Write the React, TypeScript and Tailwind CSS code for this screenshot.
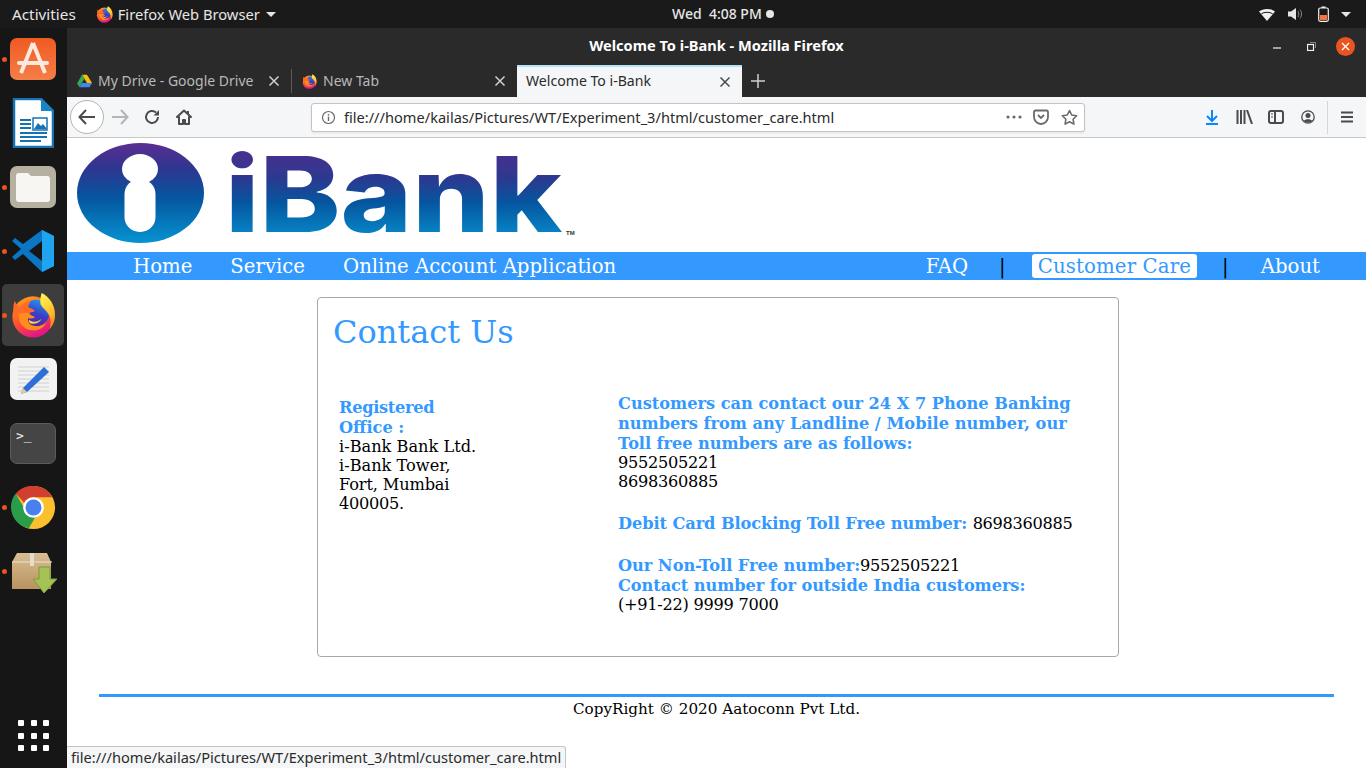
import React from "react";

const ui = { fontFamily: '"Noto Sans", "Open Sans", sans-serif' };
const serif = { fontFamily: '"DejaVu Serif", serif' };

function FirefoxIcon({ size = 16 }: { size?: number }) {
  return (
    <svg width={size} height={size} viewBox="0 0 48 48">
      <defs>
        <linearGradient id="ffa" x1="0.1" y1="0.1" x2="0.5" y2="1">
          <stop offset="0" stopColor="#ff9a1c" />
          <stop offset="0.55" stopColor="#ff4f2e" />
          <stop offset="1" stopColor="#e31587" />
        </linearGradient>
        <linearGradient id="ffb" x1="0.3" y1="0" x2="0.6" y2="1">
          <stop offset="0" stopColor="#fff44f" />
          <stop offset="0.6" stopColor="#ffbd2e" />
          <stop offset="1" stopColor="#ff7a1a" />
        </linearGradient>
        <linearGradient id="ffc" x1="0.7" y1="0" x2="0.3" y2="1">
          <stop offset="0" stopColor="#1f9af0" />
          <stop offset="0.5" stopColor="#3a3fc8" />
          <stop offset="1" stopColor="#5a1fa0" />
        </linearGradient>
      </defs>
      <circle cx="24" cy="26" r="21.500" fill="url(#ffa)" />
      <circle cx="27" cy="22" r="14" fill="url(#ffc)" />
      <path d="M33 1c8 4 14 12 14 23 0 6-2 11-6 15 2-5 2-11-1-16-2-4-6-6-8-10-1-4 0-8 1-12z" fill="url(#ffb)" />
      <path d="M9 21c-1 9 4 18 14 19 7 1 13-3 15-9-3 4-9 6-14 4-4-1-6-5-5-8 2 1 5 1 7-1-3-1-5-2-6-4-4 0-8-1-11-1z" fill="#ff8d1e" />
      <path d="M5 9c1 3 3 5 5 7 3-4 7-6 12-7-2 3-3 5-3 7 3 1 5 2 7 4-3 1-6 2-8 2-4 0-9 0-14 2-1-5-1-10 1-15z" fill="#ff6a26" />
      <path d="M20 29c3 3 9 3 13-1-2 4-7 6-11 5-2-1-3-2-2-4z" fill="#ffd43b" />
    </svg>
  );
}

function DriveIcon() {
  return (
    <svg width="15" height="14" viewBox="0 0 24 22">
      <path d="M8 1h8l8 13h-8z" fill="#fbbc04" />
      <path d="M8 1l-8 14 4 6 8-14z" fill="#34a853" />
      <path d="M4 21h16l4-7H8z" fill="#4285f4" />
    </svg>
  );
}

function CloseX({ color = "#d0d0d0" }: { color?: string }) {
  return (
    <svg width="12" height="12" viewBox="0 0 12 12">
      <path d="M1.500 1.500l9 9M10.500 1.500l-9 9" stroke={color} strokeWidth="1.500" />
    </svg>
  );
}

function TopBar() {
  return (
    <div className="h-7 shrink-0 bg-[#1a1a1a] flex items-center text-[#e6e6e6] text-[14.7px] relative" style={ui}>
      <span className="ml-3 text-[15.300px]">Activities</span>
      <span className="ml-5 flex"><FirefoxIcon size={17} /></span>
      <span className="ml-[5px]">Firefox Web Browser</span>
      <span className="ml-[6px] border-x-[5px] border-x-transparent border-t-[5px] border-t-[#e6e6e6]" />
      <span className="absolute left-[672px] top-[3px] text-[14px] font-medium">Wed&nbsp; 4:08 PM</span>
      <span className="absolute left-[766px] top-[10px] w-2 h-2 rounded-full bg-[#e6e6e6]" />
      <div className="ml-auto flex items-center mr-[15px]">
        <svg width="16" height="13" viewBox="0 0 16 13"><path d="M0 3.500C4 0 12 0 16 3.500L8 13z" fill="#f2f2f2" /><path d="M2.400 5.700c3-1.900 8.200-1.900 11.200 0" stroke="#1a1a1a" strokeWidth="1" fill="none" /></svg>
        <svg className="ml-[13px]" width="15" height="14" viewBox="0 0 15 14"><path d="M0 4.500h3L8 1v12L3 9.500H0z" fill="#e6e6e6" /><path d="M10 4c1 1.500 1 4.500 0 6M12 2.500c2 2.500 2 6.500 0 9" stroke="#8a8a8a" strokeWidth="1" fill="none" /></svg>
        <svg className="ml-[15px]" width="11" height="16" viewBox="0 0 11 16"><rect x="0.700" y="2" width="9.600" height="13.300" rx="1.500" fill="none" stroke="#f2f2f2" strokeWidth="1.200" /><rect x="3.500" y="0.500" width="4" height="1.500" fill="#f2f2f2" /><rect x="2" y="9" width="7" height="5" fill="#f4733a" /></svg>
        <span className="ml-[12px] border-x-[5px] border-x-transparent border-t-[5px] border-t-[#e6e6e6]" />
      </div>
    </div>
  );
}

function DockSlot({ dot, active, children }: { dot?: boolean; active?: boolean; children: React.ReactNode }) {
  return (
    <div className={`relative w-[62px] h-[62px] ml-[2px] mb-[2px] flex items-center justify-center rounded-[5px] ${active ? "bg-[#3d3d3d]" : ""}`}>
      {dot && <span className="absolute left-[0px] top-[28.500px] w-[5px] h-[5px] rounded-full bg-[#e95420]" />}
      {children}
    </div>
  );
}

function Dock() {
  return (
    <div className="w-[67px] shrink-0 bg-[#161616] flex flex-col relative">
      <DockSlot dot>
        <svg width="48" height="44" viewBox="0 0 48 44">
          <defs><linearGradient id="ub" x1="0" y1="0" x2="0" y2="1"><stop offset="0" stopColor="#f05a22" /><stop offset="1" stopColor="#f47f47" /></linearGradient></defs>
          <rect x="1" y="1" width="46" height="42" rx="7" fill="url(#ub)" />
          <path d="M24 6L12 36M24 6l12 30" stroke="#fbe9e0" strokeWidth="4" fill="none" />
          <path d="M10 26h28" stroke="#fbe9e0" strokeWidth="4" strokeLinecap="round" />
        </svg>
      </DockSlot>
      <DockSlot>
        <svg width="42" height="50" viewBox="0 0 42 50">
          <path d="M2 1h27l12 12v36H2z" fill="#fff" stroke="#1473b5" strokeWidth="2.500" />
          <path d="M29 0l13 13H29z" fill="#1a84c9" />
          <path d="M8 22h11M8 26h11M8 30h11M8 35h27M8 39h27M8 43h21" stroke="#1473b5" strokeWidth="2" />
          <rect x="21" y="20" width="14" height="12" fill="#fff" stroke="#1473b5" strokeWidth="1.500" />
          <path d="M22 31l4-6 3 3 2-2 4 5z" fill="#1473b5" />
        </svg>
      </DockSlot>
      <DockSlot dot>
        <svg width="46" height="42" viewBox="0 0 46 42">
          <rect x="0" y="0" width="46" height="42" rx="7" fill="#b5b0a0" />
          <path d="M6 10c0-2 1-3 3-3h9l3 3h16c2 0 3 1 3 3v20c0 2-1 3-3 3H9c-2 0-3-1-3-3z" fill="#f8f6f3" />
        </svg>
      </DockSlot>
      <DockSlot dot>
        <svg width="44" height="44" viewBox="0 0 44 44">
          <path d="M31 1l12 6v30l-12 6-19-18-8 6-3-3 9-8-9-8 3-3 8 6z" fill="#0a76c4" />
          <path d="M31 1l12 6v30l-12 6z" fill="#1fa5ef" />
          <path d="M31 12L18 22l13 10z" fill="#161616" />
        </svg>
      </DockSlot>
      <DockSlot dot active><FirefoxIcon size={46} /></DockSlot>
      <DockSlot>
        <svg width="47" height="42" viewBox="0 0 47 42">
          <rect x="0" y="0" width="47" height="42" rx="7" fill="#f2f2f2" />
          <path d="M8 9h31M8 13h31M8 17h31M8 21h31M8 25h31M8 29h31M8 33h31" stroke="#d0d0d0" strokeWidth="1" />
          <path d="M34 9l5 5-22 20-6 2 2-6z" fill="#2d6ed8" />
          <path d="M13 30l4 4-6 2z" fill="#e8c9a0" />
        </svg>
      </DockSlot>
      <DockSlot>
        <div className="w-[46px] h-[41px] rounded-[7px] bg-[#454545] border border-[#5c5c5c] text-[#f2f2f2] text-[13px] leading-none pl-[5px] pt-[5px]" style={{ fontFamily: '"DejaVu Sans Mono", monospace' }}>&gt;_</div>
      </DockSlot>
      <DockSlot dot>
        <svg width="45" height="45" viewBox="0 0 48 48">
          <circle cx="24" cy="24" r="23" fill="#fbc02d" />
          <path d="M24 1a23 23 0 0 1 20 12H24a11 11 0 0 0-10 6L5 9A23 23 0 0 1 24 1z" fill="#d23f31" />
          <path d="M5 9l10 17a10 10 0 0 0 11 8l-7 12A23 23 0 0 1 5 9z" fill="#2a9d4a" />
          <circle cx="24" cy="24" r="11" fill="#fff" />
          <circle cx="24" cy="24" r="8.500" fill="#4a80ee" />
        </svg>
      </DockSlot>
      <DockSlot dot>
        <svg className="ml-[4px] mt-[5px]" width="46" height="41" viewBox="0 0 46 41">
          <defs><linearGradient id="bx" x1="0" y1="0" x2="0" y2="1"><stop offset="0" stopColor="#d9bd94" /><stop offset="1" stopColor="#b8935f" /></linearGradient></defs>
          <path d="M5 0h30l4 9v27H0V9z" fill="url(#bx)" />
          <path d="M0 9h40" stroke="#efe0c8" strokeWidth="1" />
          <rect x="18" y="0" width="4" height="13" fill="#e8dcc6" />
          <path d="M27 14h11v12h7L32 40 21 26h6z" fill="#a5c255" stroke="#7d9a3c" strokeWidth="1" />
        </svg>
      </DockSlot>
      <div className="absolute left-[18px] top-[692px] grid grid-cols-3 gap-x-[6.500px] gap-y-[6.500px]">
        {Array.from({ length: 9 }).map((_, i) => (
          <span key={i} className="w-[6px] h-[6px] bg-white rounded-[1px]" />
        ))}
      </div>
    </div>
  );
}

function TabStrip() {
  return (
    <div className="h-[32px] shrink-0 flex items-stretch text-[14px]" style={ui}>
      <div className="w-[224px] flex items-center pl-[10px] text-[#b9b9b9]">
        <DriveIcon />
        <span className="ml-[6px] mb-[2px]">My Drive - Google Drive</span>
        <span className="ml-auto mr-[11px]"><CloseX /></span>
      </div>
      <div className="w-[1px] my-[4px] bg-[#5a5a5a]" />
      <div className="w-[225px] flex items-center pl-[10px] text-[#b9b9b9]">
        <FirefoxIcon size={15} />
        <span className="ml-[6px] mb-[2px]">New Tab</span>
        <span className="ml-auto mr-[11px]"><CloseX /></span>
      </div>
      <div className="w-[225px] bg-[#f5f6f7] border-t-2 border-[#b5e3f7] flex items-center pl-[9px] text-[#2b2b2b] text-[14.100px]">
        <span className="mb-[2px]">Welcome To i-Bank</span>
        <span className="ml-auto mr-[11px]"><CloseX color="#4a4a4a" /></span>
      </div>
      <div className="w-[32px] flex items-center justify-center">
        <svg width="14" height="14" viewBox="0 0 14 14"><path d="M7 0v14M0 7h14" stroke="#d0d0d0" strokeWidth="1.500" /></svg>
      </div>
    </div>
  );
}

function NavBar() {
  const stroke = "#4a4a4f";
  return (
    <div className="h-[41px] shrink-0 bg-[#f5f6f7] border-b border-[#c8c8c8] flex items-center relative" style={ui}>
      <div className="ml-[3px] w-[34px] h-[34px] rounded-full border border-[#b5b5b5] bg-white flex items-center justify-center">
        <svg width="18" height="16" viewBox="0 0 18 16"><path d="M8 1L1.500 8 8 15M2 8h15" fill="none" stroke={stroke} strokeWidth="2" /></svg>
      </div>
      <svg className="ml-[7px]" width="18" height="16" viewBox="0 0 18 16"><path d="M10 1l6.500 7L10 15M16 8H1" fill="none" stroke="#b4b4b4" strokeWidth="2" /></svg>
      <svg className="ml-[15px]" width="16" height="16" viewBox="0 0 16 16"><path d="M14 8a6 6 0 1 1-2-4.500" fill="none" stroke={stroke} strokeWidth="2" /><path d="M15 1v5.500H9.500z" fill={stroke} /></svg>
      <svg className="ml-[16px]" width="16" height="16" viewBox="0 0 16 16"><path d="M8 1.500L1 8h2v7h4v-4h2v4h4V8h2zM12 2v3" fill="none" stroke={stroke} strokeWidth="2" strokeLinejoin="round" /></svg>
      <div className="ml-[119px] w-[774px] h-[29px] rounded-[3px] bg-white border border-[#c4c4c8] flex items-center shadow-[0_1px_2px_rgba(0,0,0,0.08)]">
        <svg className="ml-[9px]" width="15" height="15" viewBox="0 0 15 15"><circle cx="7.500" cy="7.500" r="6" fill="none" stroke="#6a6a6a" strokeWidth="1.200" /><path d="M7.500 6.500v4.500M7.500 4v1.500" stroke="#6a6a6a" strokeWidth="1.400" /></svg>
        <span className="ml-[8px] mt-[1px] text-[14.600px] text-[#2b2b2b]">file:///home/kailas/Pictures/WT/Experiment_3/html/customer_care.html</span>
        <svg className="ml-auto" width="16" height="4" viewBox="0 0 16 4"><circle cx="2" cy="2" r="1.600" fill="#6a6a6a" /><circle cx="8" cy="2" r="1.600" fill="#6a6a6a" /><circle cx="14" cy="2" r="1.600" fill="#6a6a6a" /></svg>
        <svg className="ml-[11px]" width="16" height="16" viewBox="0 0 16 16"><path d="M1 3c0-1 .5-1.500 1.500-1.500h11c1 0 1.500.5 1.500 1.500v5a7 7 0 0 1-14 0z" fill="none" stroke="#6a6a6a" strokeWidth="1.800" /><path d="M5 6l3 3 3-3" fill="none" stroke="#6a6a6a" strokeWidth="1.800" /></svg>
        <svg className="ml-[12px] mr-[6px]" width="17" height="16" viewBox="0 0 17 16"><path d="M8.500 1.500l2.200 4.500 5 .7-3.600 3.500.8 4.900-4.400-2.300-4.400 2.300.8-4.900L1.300 6.700l5-.7z" fill="none" stroke="#6a6a6a" strokeWidth="1.600" strokeLinejoin="round" /></svg>
      </div>
      <svg className="ml-[120px]" width="14" height="15" viewBox="0 0 14 15"><path d="M7 0v10M2 6l5 5 5-5" fill="none" stroke="#0a84ff" strokeWidth="2" /><path d="M1 14h12" stroke="#0a84ff" strokeWidth="2" /></svg>
      <svg className="ml-[17px]" width="17" height="14" viewBox="0 0 17 14"><path d="M1.500 0v14M5 0v14M8.500 0v14M11 0l5 14" stroke={stroke} strokeWidth="2" fill="none" /></svg>
      <svg className="ml-[15px]" width="16" height="14" viewBox="0 0 16 14"><rect x="1" y="1" width="14" height="12" rx="2" fill="none" stroke={stroke} strokeWidth="2" /><path d="M7 1v12" stroke={stroke} strokeWidth="2" /><path d="M3 4h2M3 7h2" stroke={stroke} strokeWidth="1" /></svg>
      <svg className="ml-[17px]" width="14" height="14" viewBox="0 0 14 14"><circle cx="7" cy="7" r="6.200" fill="none" stroke={stroke} strokeWidth="1.300" /><circle cx="7" cy="5.500" r="2.500" fill={stroke} /><path d="M2.800 11c1-2.500 7.400-2.500 8.400 0-2 2-6.400 2-8.400 0z" fill={stroke} /></svg>
      <div className="ml-[12px] w-px h-[33px] bg-[#d6d6d6]" />
      <svg className="ml-[13px]" width="12" height="12" viewBox="0 0 12 12"><path d="M0 1.500h12M0 6h12M0 10.500h12" stroke={stroke} strokeWidth="2" /></svg>
    </div>
  );
}

function Logo() {
  return (
    <svg width="500" height="103" viewBox="0 0 500 103" className="block overflow-visible">
      <defs>
        <linearGradient id="lg" x1="0" y1="0" x2="0" y2="1">
          <stop offset="0" stopColor="#5b2e91" />
          <stop offset="0.25" stopColor="#2f3590" />
          <stop offset="0.55" stopColor="#05569f" />
          <stop offset="1" stopColor="#0693d2" />
        </linearGradient>
        <linearGradient id="lt" gradientUnits="userSpaceOnUse" x1="0" y1="14" x2="0" y2="92">
          <stop offset="0" stopColor="#45308f" />
          <stop offset="0.3" stopColor="#2a3a90" />
          <stop offset="0.6" stopColor="#05569f" />
          <stop offset="1" stopColor="#0785c6" />
        </linearGradient>
      </defs>
      <ellipse cx="63.500" cy="51" rx="63.500" ry="50" fill="url(#lg)" />
      <ellipse cx="63" cy="27" rx="18" ry="15" fill="#fff" />
      <rect x="47.500" y="37" width="31" height="53" rx="15" fill="#fff" />
      <text x="148" y="90" fill="url(#lt)" fontSize="105" fontWeight="800" textLength="337" lengthAdjust="spacingAndGlyphs" style={{ fontFamily: 'Inter, "Liberation Sans", sans-serif' }}>iBank</text>
      <text x="489" y="93" fontSize="6" fontWeight="700" fill="#333" style={{ fontFamily: '"Liberation Sans", Arial, sans-serif' }}>TM</text>
    </svg>
  );
}

function Page() {
  const blue = "text-[#3399ff]";
  return (
    <div className="flex-1 bg-white flex flex-col relative min-h-0" style={serif}>
      <div className="h-[114px] shrink-0 pl-[10px] pt-[4px]"><Logo /></div>
      <div className="h-[28px] shrink-0 bg-[#3399ff] flex items-center text-white text-[19.700px]">
        <span className="ml-[66px] mt-[2px]">Home</span>
        <span className="ml-[38px] mt-[2px]">Service</span>
        <span className="ml-[38px] mt-[2px]">Online Account Application</span>
        <span className="ml-auto mt-[2px]">FAQ</span>
        <span className="ml-[31px] mt-[2px] text-black">|</span>
        <span className="ml-[26px] bg-white text-[#3399ff] px-[6px] pt-[1px] rounded-[3px] leading-[23px] tracking-[0.15px]">Customer Care</span>
        <span className="ml-[25px] mt-[2px] text-black">|</span>
        <span className="ml-[32px] mr-[46px] mt-[2px]">About</span>
      </div>
      <div className="mt-[17px] ml-[250px] w-[802px] h-[360px] shrink-0 border border-[#a8a8a8] rounded-[4px] relative px-[15px]">
        <h1 className={`mt-[14px] text-[32px] leading-[40px] ${blue}`}>Contact Us</h1>
        <div className="mt-[42px] flex text-[16.200px] leading-[19px] text-black">
          <div className="w-[285px] pl-[6px] pt-[4px]">
            <div className={`font-bold ${blue} leading-[20px] w-[130px]`}><span className="tracking-[-0.3px]">Registered</span> Office :</div>
            <div className="-mt-[1px]">i-Bank Bank Ltd.</div>
            <div>i-Bank Tower,</div>
            <div className="tracking-[-0.15px]">Fort, Mumbai</div>
            <div className="tracking-[-0.3px]">400005.</div>
          </div>
          <div className="flex-1">
            <div className={`font-bold ${blue} leading-[20px]`}>
              <div>Customers can contact our 24 X 7 Phone Banking</div>
              <div>numbers from any Landline / Mobile number, our</div>
              <div className="tracking-[-0.06px]">Toll free numbers are as follows:</div>
            </div>
            <div className="-mt-[1px] tracking-[-0.3px]">9552505221</div>
            <div className="tracking-[-0.3px]">8698360885</div>
            <div className="mt-[23px] leading-[20px]"><span className={`font-bold ${blue} tracking-[-0.08px]`}>Debit Card Blocking Toll Free number: </span><span className="tracking-[-0.3px]">8698360885</span></div>
            <div className="mt-[22px] leading-[20px]"><span className={`font-bold ${blue} tracking-[-0.04px]`}>Our Non-Toll Free number:</span><span className="tracking-[-0.3px]">9552505221</span></div>
            <div className={`font-bold ${blue} leading-[20px] tracking-[-0.07px]`}>Contact number for outside India customers:</div>
            <div className="-mt-[1px] tracking-[-0.28px]">(+91-22) 9999 7000</div>
          </div>
        </div>
      </div>
      <div className="mt-[37px] mx-[32px] h-[3px] shrink-0 bg-[#3399ff]" />
      <div className="text-center text-[15.200px] leading-[19px] mt-[3px] text-black">CopyRight © 2020 Aatoconn Pvt Ltd.</div>
      <div className="absolute left-0 bottom-0 h-[22px] px-[4px] bg-[#f5f6f7] border border-l-0 border-b-0 border-[#c4c4c8] rounded-tr-[3px] text-[14.600px] leading-[21px] text-[#2b2b2b]" style={ui}>file:///home/kailas/Pictures/WT/Experiment_3/html/customer_care.html</div>
    </div>
  );
}

function Browser() {
  return (
    <div className="flex-1 min-w-0 flex flex-col bg-[#2b2a2b]">
      <div className="h-[37px] shrink-0 flex items-center justify-center relative text-white text-[14.600px] font-bold pb-[2px]" style={ui}>
        Welcome To i-Bank - Mozilla Firefox
        <svg className="absolute left-[1206px] top-[19px]" width="8" height="2" viewBox="0 0 8 2"><path d="M0 1h8" stroke="#f2f2f2" strokeWidth="1.200" /></svg>
        <svg className="absolute left-[1240px] top-[14px]" width="9" height="9" viewBox="0 0 9 9"><rect x="0.500" y="2.500" width="6" height="6" fill="none" stroke="#f2f2f2" strokeWidth="1.200" /><path d="M3 0.500h5.500V6" fill="none" stroke="#a0a0a0" strokeWidth="0.800" /></svg>
        <span className="absolute left-[1269px] top-[9px] w-[19px] h-[19px] rounded-full bg-[#e95420] flex items-center justify-center">
          <svg width="9" height="9" viewBox="0 0 9 9"><path d="M1 1l7 7M8 1L1 8" stroke="#fff" strokeWidth="1.300" /></svg>
        </span>
      </div>
      <TabStrip />
      <NavBar />
      <Page />
    </div>
  );
}

export default function App() {
  return (
    <div className="w-[1366px] h-[768px] overflow-hidden flex flex-col">
      <TopBar />
      <div className="flex-1 flex min-h-0">
        <Dock />
        <Browser />
      </div>
    </div>
  );
}
